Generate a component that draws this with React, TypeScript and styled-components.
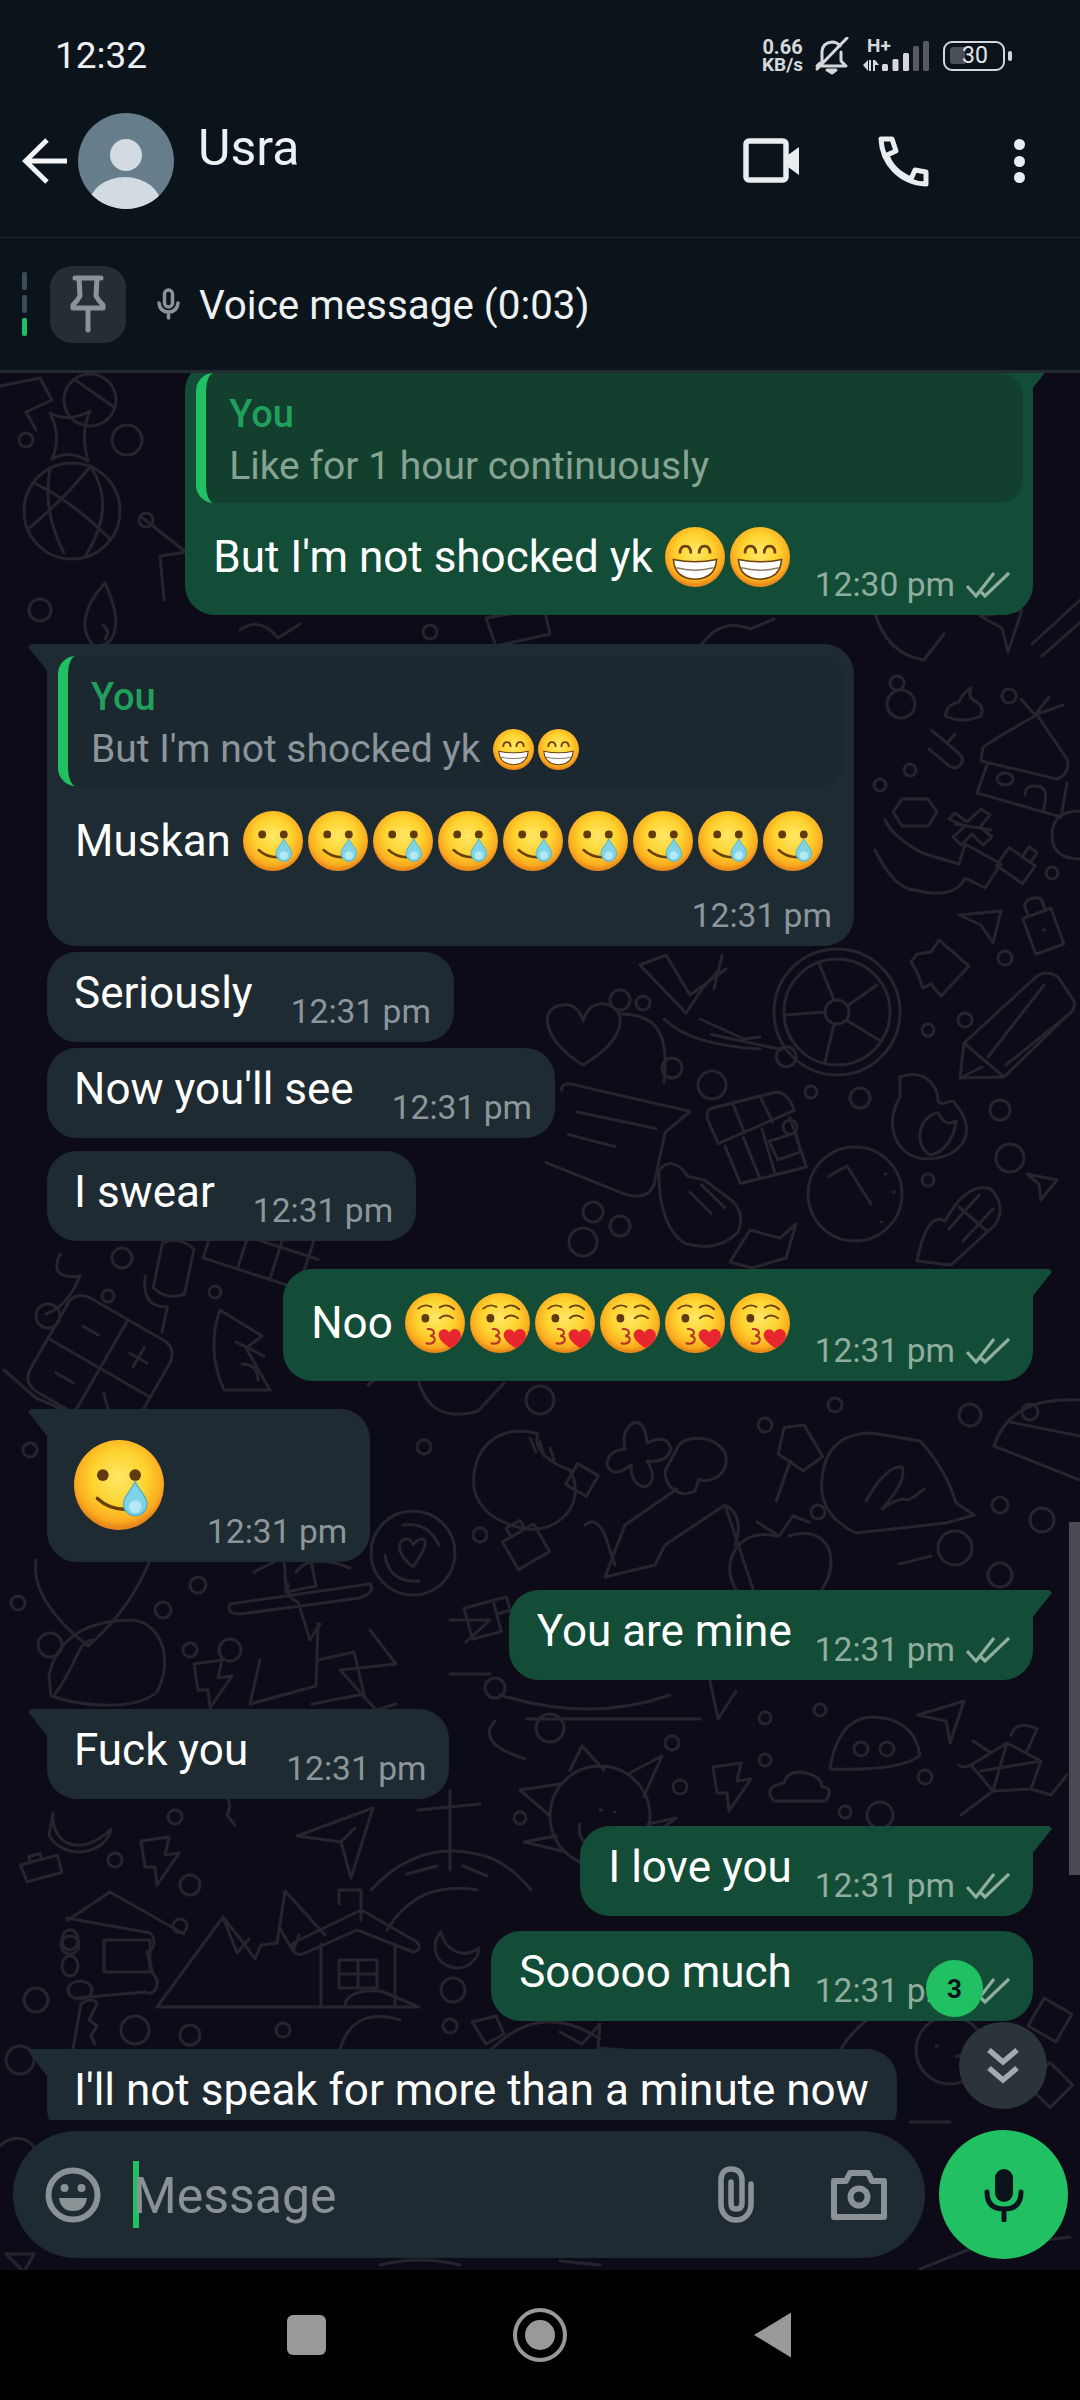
import React from 'react'
import styled, { createGlobalStyle } from 'styled-components'

const GlobalStyle = createGlobalStyle`
    html, body {
        margin: 0;
        padding: 0;
        background: #000;
        font-family: Roboto, "Liberation Sans", sans-serif;
    }
    * {
        box-sizing: border-box;
    }
`

const ring = (x: number, y: number, r: number) =>
    `M${x - r} ${y}a${r} ${r} 0 1 0 ${2 * r} 0a${r} ${r} 0 1 0 ${-2 * r} 0`

// wallpaper doodles, x/y are page positions of each drawing
const DOODLES: { x: number; y: number; rot?: number; d: string }[] = [
    { x: 72, y: 511, d: `${ring(0, 0, 48)}M-38 -28Q0 -10 38 28M-44 18Q-10 -10 18 -44M-22 -42Q-30 0 -8 42M20 -42Q44 -4 14 44` },
    { x: 72, y: 437, d: 'M-22 -24Q-4 -14 18 -26Q8 -4 16 24Q-2 12 -20 22Q-10 0 -22 -24Z' },
    { x: 90, y: 400, rot: 35, d: `${ring(0, 0, 26)}M-24 -8L24 -8` },
    { x: 127, y: 440, d: ring(0, 0, 15) },
    { x: 26, y: 440, d: ring(0, 0, 7) },
    { x: 146, y: 520, d: ring(0, 0, 7) },
    { x: 40, y: 610, d: ring(0, 0, 11) },
    { x: 105, y: 615, d: 'M0 -32C-22 -8 -26 14 -12 30C6 34 22 16 0 -32ZM-2 10Q6 16 0 24' },
    { x: 30, y: 400, d: 'M-30 -14L10 -22L22 0L-4 12L6 30' },
    { x: 150, y: 560, d: 'M-10 -44L36 -8L10 -4L14 40' },
    { x: 290, y: 640, d: 'M-50 -10Q-30 -24 -12 -2L10 -16' },
    { x: 430, y: 632, d: ring(0, 0, 7) },
    { x: 520, y: 632, d: 'M-34 -14L24 -24L30 2L-24 14Z' },
    { x: 730, y: 635, d: 'M-30 12Q-10 -18 20 -6L44 -16' },
    { x: 910, y: 640, d: 'M-36 -30Q-24 14 14 20L34 -6' },
    { x: 1000, y: 630, d: 'M-20 -14L22 -20L8 22L2 -2Z' },
    { x: 1060, y: 620, d: 'M-28 24L20 -20M-18 36L32 -8' },
    { x: 897, y: 683, d: ring(0, 0, 7) },
    { x: 901, y: 704, d: ring(0, 0, 14) },
    { x: 965, y: 702, d: 'M-20 14Q-18 2 -6 0Q-2 -10 6 -14Q2 -4 12 0Q20 6 16 14Q-2 22 -20 14Z' },
    { x: 1009, y: 696, d: ring(0, 0, 7) },
    { x: 910, y: 770, d: ring(0, 0, 6) },
    { x: 880, y: 785, d: ring(0, 0, 6) },
    { x: 945, y: 752, rot: 40, d: 'M-24 -8H10Q20 -8 20 0Q20 8 10 8H-14M-4 -20V-8' },
    { x: 1027, y: 761, d: 'M-44 -14Q-20 -30 10 -46L40 -2Q44 12 30 18L-46 0ZM-40 4L-50 32L34 56L40 22M-2 34Q-2 22 14 26Q22 30 16 50M8 -46L-6 -62M8 -46L22 -64M8 -46L36 -56M-30 18a8 6 0 1 0 16 0a8 6 0 1 0 -16 0' },
    { x: 915, y: 812, d: 'M-13 -13H13L22 0L13 14H-13L-22 0Z' },
    { x: 973, y: 823, d: 'M-18 -10L-6 -1L8 -14L17 -8L7 4L19 14L10 22L-1 11L-12 22L-20 14L-8 3L-24 -4Z' },
    { x: 1060, y: 835, d: 'M20 -24Q-8 -24 -8 0Q-8 24 20 24' },
    { x: 1018, y: 866, rot: 35, d: 'M-18 -10H14V12H-18ZM-2 -10V-22H8V-10' },
    { x: 1052, y: 873, d: ring(0, 0, 6) },
    { x: 935, y: 870, d: 'M-50 -50Q-40 -30 -10 -16L24 -6L30 -26L66 -6L50 18L30 8Q20 30 -20 20Q-40 20 -60 -20M20 -46L56 -40' },
    { x: 1040, y: 925, rot: -20, d: 'M-14 -12H16V26H-14ZM-8 -12V-24Q0 -32 10 -24V-12M2 6h1' },
    { x: 985, y: 925, d: 'M-26 -10L16 -14L8 18L-4 0Z' },
    { x: 937, y: 968, d: 'M-20 -14L-6 -16L2 -28L32 -2L4 28L-6 16L-14 20L-20 4L-26 -6Z' },
    { x: 1005, y: 958, d: ring(0, 0, 7) },
    { x: 965, y: 1020, d: ring(0, 0, 7) },
    { x: 928, y: 1030, d: ring(0, 0, 6) },
    { x: 837, y: 1012, d: `${ring(0, 0, 63)}${ring(0, 0, 53)}${ring(0, 0, 12)}M-12 0L-52 3M-3 -12L-18 -49M10 -6L40 -27M9 8L42 28M-3 12L-12 50` },
    { x: 1010, y: 1027, d: 'M-50 51L-46 16L26 -50Q36 -58 48 -50L64 -26Q66 -18 58 -12L-6 50ZM-46 16L-6 50M-22 30L34 -42M-4 38L58 -12M-50 51L-28 40' },
    { x: 620, y: 1000, d: ring(0, 0, 10) },
    { x: 643, y: 1003, d: ring(0, 0, 7) },
    { x: 710, y: 1005, d: 'M-70 -40L-24 8L-8 -16L8 -34M-70 -40L-44 -50L-20 -10L16 -36M-46 14Q-20 40 50 44M-10 14L34 34L50 32M12 -50L4 -16' },
    { x: 755, y: 1050, rot: 12, d: `M-46 -6H26${ring(32, 0, 10)}` },
    { x: 583, y: 1035, d: 'M0 30C-40 6 -46 -28 -20 -30C-8 -32 -2 -22 0 -14C4 -28 14 -34 26 -30C46 -20 40 6 0 30Z' },
    { x: 640, y: 1070, d: 'M-20 -56C14 -56 30 -40 24 12' },
    { x: 672, y: 1068, d: ring(0, 0, 10) },
    { x: 712, y: 1085, d: ring(0, 0, 14) },
    { x: 811, y: 1092, d: ring(0, 0, 6) },
    { x: 860, y: 1098, d: ring(0, 0, 10) },
    { x: 623, y: 1138, rot: 12, d: 'M-70 -34Q-72 -42 -60 -42L60 -40L40 -14L40 40Q36 58 10 54L-70 40M-50 -16L30 -16M-54 8L-6 10' },
    { x: 757, y: 1134, rot: -14, d: 'M-44 -24Q-46 -36 -36 -36L28 -36Q40 -34 42 -14L-40 0ZM-16 -36L-12 -4M12 -36L18 -8M-34 4L-28 44L40 44L36 -8M-14 0L-8 44M6 -4L8 44M10 10L38 8L38 28L14 30Z' },
    { x: 930, y: 1113, d: 'M-30 -36C-8 -44 8 -30 8 -12C14 -4 22 -18 26 -8C50 20 30 46 -4 46C-36 44 -46 10 -30 -16ZM0 42C-18 30 -10 2 8 0C14 10 18 12 26 8C24 26 14 40 0 42Z' },
    { x: 1000, y: 1110, d: ring(0, 0, 10) },
    { x: 1010, y: 1158, d: ring(0, 0, 14) },
    { x: 928, y: 1180, d: ring(0, 0, 6) },
    { x: 855, y: 1194, d: `${ring(0, 0, 47)}M-26 -18L-8 -28L16 10M30 -20h1M38 -2h1M26 28h1` },
    { x: 1027, y: 1180, d: 'M0 -6L30 0L14 20L12 4Z' },
    { x: 957, y: 1221, d: 'M-40 40Q-30 -10 -12 0Q10 -40 34 -32Q50 -14 38 4L-6 44ZM-8 8L22 -26M6 20L36 -12M2 -14L30 10' },
    { x: 700, y: 1205, rot: -8, d: 'M-36 -40Q-20 -54 -8 -30L8 -24L32 0Q44 14 34 32Q10 50 -20 36Q-44 16 -36 -40ZM-8 -14L10 10M4 -20L24 6' },
    { x: 790, y: 1127, d: ring(0, 0, 7) },
    { x: 620, y: 1226, d: ring(0, 0, 10) },
    { x: 593, y: 1212, d: ring(0, 0, 10) },
    { x: 583, y: 1242, d: ring(0, 0, 14) },
    { x: 760, y: 1244, d: 'M-30 18L-10 -14L20 -6L36 -20L26 14L-8 24Z' },
    { x: 70, y: 1290, d: 'M-24 24Q-2 16 10 -14Q-22 -10 -10 -36M24 -6' },
    { x: 170, y: 1285, rot: 12, d: 'M-16 -40Q0 -50 16 -40V6Q0 16 -16 6ZM-26 -4Q-24 28 2 22V48' },
    { x: 122, y: 1258, d: ring(0, 0, 10) },
    { x: 108, y: 1296, d: ring(0, 0, 6) },
    { x: 48, y: 1316, d: ring(0, 0, 12) },
    { x: 215, y: 1292, d: ring(0, 0, 6) },
    { x: 255, y: 1260, rot: 18, d: 'M-60 -20H60M-50 -44H50V14H-50ZM-14 -44V14M20 -44V14' },
    { x: 103, y: 1363, rot: 30, d: 'M-60 -30Q-62 -50 -40 -50H40Q58 -50 58 -30V40Q58 58 40 58H-40Q-60 58 -60 40ZM-60 6H58M0 -50V58M-36 -22H-18M28 -34V-12M18 -22H38M-36 32H-16M16 26L36 46' },
    { x: 250, y: 1350, d: 'M-30 -40L12 -14L-4 -2L20 40L-26 40Q-44 0 -30 -40ZM-14 -8L14 6M-8 14Q8 14 8 30' },
    { x: 34, y: 1420, d: 'M-30 -50L2 -22L30 -10' },
    { x: 30, y: 1450, d: ring(0, 0, 7) },
    { x: 388, y: 1395, d: 'M-20 -10Q0 -30 30 -20' },
    { x: 458, y: 1397, d: 'M-40 -18Q-28 28 20 14L46 -14' },
    { x: 540, y: 1400, d: ring(0, 0, 14) },
    { x: 530, y: 1478, d: 'M-56 10C-60 -30 -30 -56 8 -44C2 -28 22 -14 40 -8C60 30 20 62 -16 48C-36 42 -52 30 -56 10ZM0 -40L6 -26M10 -36L14 -22M20 -30L24 -18' },
    { x: 424, y: 1447, d: ring(0, 0, 7) },
    { x: 582, y: 1480, rot: 30, d: 'M-12 -12H12V12H-12Z' },
    { x: 637, y: 1455, d: 'M-4 -32Q8 -36 10 -12Q30 -22 34 -6Q30 8 10 6Q22 26 8 32Q-6 30 -6 10Q-24 24 -30 10Q-30 -4 -12 -6Q-16 -24 -4 -32Z' },
    { x: 685, y: 1495, d: 'M-6 -50C4 -60 30 -60 40 -42C46 -22 26 -10 14 -16L10 -4C-6 4 -20 -8 -20 -24ZM-8 -6L-60 30L-80 82L-30 70L-20 50L40 10L70 100M40 10Q60 20 50 50M-100 30Q-90 20 -80 40L-70 70' },
    { x: 796, y: 1455, rot: 30, d: 'M-24 -18L-8 -30L24 -12L14 10L-16 8ZM-2 8L6 50' },
    { x: 765, y: 1425, d: ring(0, 0, 7) },
    { x: 835, y: 1405, d: ring(0, 0, 7) },
    { x: 896, y: 1489, d: 'M-74 -10Q-70 -56 -24 -56L24 -48Q50 -20 60 14L78 26L50 34L-40 44Q-78 26 -74 -10ZM-30 12Q-10 -24 6 -22Q12 -10 -14 20Q0 10 8 10Q12 14 28 0' },
    { x: 1020, y: 1440, d: 'M-26 6Q-10 -44 60 -40M-26 6L60 40M-10 -18L60 -4' },
    { x: 970, y: 1415, d: ring(0, 0, 11) },
    { x: 1030, y: 1412, d: ring(0, 0, 8) },
    { x: 1000, y: 1505, d: ring(0, 0, 8) },
    { x: 1042, y: 1520, d: ring(0, 0, 12) },
    { x: 1000, y: 1575, d: ring(0, 0, 12) },
    { x: 781, y: 1564, d: 'M-4 -28C-40 -36 -56 -8 -50 14C-42 40 -20 50 0 38C30 50 50 20 50 -2C50 -26 30 -36 8 -28M-2 -28L-24 -42M-2 -28L12 -48L28 -42' },
    { x: 915, y: 1560, d: 'M-16 4L16 -4M30 -8' },
    { x: 955, y: 1548, d: ring(0, 0, 17) },
    { x: 818, y: 1512, d: ring(0, 0, 7) },
    { x: 525, y: 1545, rot: -30, d: 'M-18 -14H18V18H-18ZM-8 -14V-24H8V-14' },
    { x: 480, y: 1535, d: ring(0, 0, 7) },
    { x: 413, y: 1553, d: `${ring(0, 0, 42)}M-28 2Q-24 30 6 28M26 -8Q14 -32 -10 -28M0 14C-18 0 -16 -14 -6 -14Q-2 -14 0 -8Q4 -14 10 -14Q18 -12 0 14Z` },
    { x: 300, y: 1490, rot: 15, d: 'M-16 -40Q0 -50 16 -40V-12H-16ZM-8 -10V20H8V-10M0 4h1' },
    { x: 300, y: 1590, d: 'M-70 14Q-74 24 -60 24L60 8Q76 2 70 -6L-70 14ZM-16 -34C-10 -44 10 -44 10 -34L16 -4L-14 2ZM-40 -46L-26 -28L-46 -18' },
    { x: 60, y: 1600, d: 'M-24 -40Q-30 0 28 46Q70 10 90 -40' },
    { x: 18, y: 1603, d: ring(0, 0, 7) },
    { x: 163, y: 1610, d: ring(0, 0, 8) },
    { x: 198, y: 1585, d: ring(0, 0, 8) },
    { x: 320, y: 1660, d: 'M-24 -88Q-10 -108 30 -92M-32 -76Q-34 -62 -22 -58L-10 -20L0 -36M-60 0L-70 44L-4 26L-2 -36M50 -30L76 4L20 10L56 50L76 44M-2 0L34 -8L44 34L-8 44' },
    { x: 107, y: 1670, d: 'M-58 6C-50 -36 -14 -50 26 -50C56 -46 66 -8 50 22C30 40 -20 38 -56 26ZM-52 24C-30 -4 -30 -30 -14 -30' },
    { x: 50, y: 1645, d: ring(0, 0, 12) },
    { x: 190, y: 1650, d: ring(0, 0, 7) },
    { x: 230, y: 1650, d: ring(0, 0, 11) },
    { x: 210, y: 1684, d: 'M-16 -20L12 -24L8 -6L22 -8L0 24L-2 6L-12 6Z' },
    { x: 470, y: 1650, d: 'M-20 -30H20L-4 -8M-20 24H20' },
    { x: 490, y: 1620, rot: -15, d: 'M-22 -18V14H8V-18ZM8 -18H22V-4H8' },
    { x: 495, y: 1688, d: ring(0, 0, 10) },
    { x: 505, y: 1735, d: 'M-10 -14Q-30 8 20 24' },
    { x: 590, y: 1705, d: 'M-90 -10Q0 18 80 -10M-64 14L110 14M120 -24L128 14L146 -14' },
    { x: 550, y: 1728, d: ring(0, 0, 14) },
    { x: 672, y: 1743, d: ring(0, 0, 7) },
    { x: 765, y: 1718, d: ring(0, 0, 6) },
    { x: 820, y: 1710, d: ring(0, 0, 6) },
    { x: 940, y: 1719, d: 'M-22 -4L24 -18L10 24L6 2Z' },
    { x: 874, y: 1747, d: 'M-44 22Q-36 -30 0 -30Q40 -28 46 8Q30 24 -44 22ZM-20 2a7 7 0 1 0 14 0a7 7 0 1 0 -14 0M6 2a7 7 0 1 0 14 0a7 7 0 1 0 -14 0' },
    { x: 1007, y: 1765, d: 'M-36 0L0 -22L34 -4L24 24L-14 26ZM-16 -12L-34 -24M20 -14L30 -36Q10 -46 4 -30M-36 0Q-44 4 -48 0M-14 26L-46 50M24 24L44 30L60 10M0 -22L-14 26M34 -4L-26 6' },
    { x: 800, y: 1787, d: 'M-26 14Q-38 0 -16 -4Q-12 -18 6 -14Q22 -10 22 0Q34 0 26 14Z' },
    { x: 729, y: 1787, d: 'M-16 -20L12 -24L8 -6L22 -8L0 24L-2 6L-12 6Z' },
    { x: 600, y: 1816, d: `${ring(0, 0, 50)}M-30 -46L-18 -70L4 -46M28 -42L62 -60L44 -20M48 8L76 2L44 26M-50 0L-80 -26L-40 -32M-44 20L-76 26L-34 36M-20 8Q-24 26 -6 30M0 -6h2M14 -4h1` },
    { x: 520, y: 1818, d: ring(0, 0, 6) },
    { x: 680, y: 1787, d: ring(0, 0, 7) },
    { x: 765, y: 1760, d: ring(0, 0, 6) },
    { x: 925, y: 1777, d: ring(0, 0, 7) },
    { x: 880, y: 1815, d: ring(0, 0, 13) },
    { x: 845, y: 1812, d: ring(0, 0, 6) },
    { x: 343, y: 1838, d: 'M-46 -2L30 -30L8 40L-2 4ZM-2 4L12 -10' },
    { x: 157, y: 1861, d: 'M-16 -20L12 -24L8 -6L22 -8L0 24L-2 6L-12 6Z' },
    { x: 77, y: 1833, d: 'M-24 -20C-26 14 6 24 34 -4C30 20 -12 30 -28 2Z' },
    { x: 40, y: 1868, rot: -15, d: 'M-18 -8H20V10H-16ZM-8 -8V-14H4V-8' },
    { x: 115, y: 1860, d: ring(0, 0, 7) },
    { x: 190, y: 1885, d: ring(0, 0, 10) },
    { x: 175, y: 1817, d: ring(0, 0, 7) },
    { x: 235, y: 1805, d: 'M-14 -18C-8 -8 -2 -2 -8 10L0 20' },
    { x: 70, y: 1945, d: ring(0, 0, 9) },
    { x: 180, y: 1926, d: ring(0, 0, 7) },
    { x: 470, y: 1830, d: 'M-20 -40V40M-52 -20L10 -26' },
    { x: 140, y: 1950, d: 'M-72 -30L-30 -58L44 -16M-78 -10a8 10 0 1 0 16 0a8 10 0 1 0 -16 0M-78 16a8 10 0 1 0 16 0a8 10 0 1 0 -16 0M-72 40a12 9 0 1 0 24 0a12 9 0 1 0 -24 0M-36 -10H10V22H-36Z' },
    { x: 107, y: 1950, d: 'M-40 -32L38 -18a8 10 0 1 1 2 20L46 24a8 10 0 1 1 -8 18L-30 48' },
    { x: 357, y: 1950, d: 'M-64 0Q-70 -4 -58 -10L0 -38Q4 -40 8 -38L60 -8Q66 0 56 2L0 -20L-54 4Q-60 6 -64 0ZM-36 -6V56M38 -6V56M-18 10H20V38H-18ZM1 10V38M-18 24H20M-18 -46V-60H4V-30' },
    { x: 285, y: 1945, d: 'M-128 62L-62 -28L-40 0L-30 14L-24 0L-8 -2L0 -54L40 -10M-128 62H134M-62 -28L-48 8L-36 -6M-6 -18L8 6L14 -10M60 62Q60 44 96 46L134 62' },
    { x: 447, y: 1950, d: 'M-76 -60Q-30 -110 30 -96Q60 -90 84 -60M-60 -20Q-30 -70 30 -60M-40 -76L-10 -84M16 -84L40 -74' },
    { x: 455, y: 1950, d: 'M-14 -18C-26 -6 -20 16 2 18C14 18 24 8 24 -2C8 10 -10 0 -14 -18Z' },
    { x: 453, y: 1990, d: ring(0, 0, 12) },
    { x: 36, y: 2000, d: ring(0, 0, 12) },
    { x: 135, y: 2030, d: ring(0, 0, 14) },
    { x: 190, y: 2035, d: ring(0, 0, 10) },
    { x: 85, y: 2030, d: 'M-14 30L-4 -26Q8 -34 12 -26L4 -10L12 -4L6 6L10 14' },
    { x: 283, y: 2030, d: ring(0, 0, 7) },
    { x: 360, y: 2030, d: 'M-20 20Q-8 -24 40 -10' },
    { x: 540, y: 2025, d: 'M-50 26Q0 -26 60 14' },
    { x: 450, y: 2026, d: ring(0, 0, 7) },
    { x: 488, y: 2030, d: 'M-16 -8L8 -14L16 4L-2 14Z' },
    { x: 590, y: 2040, d: 'M-30 -8L-8 4L10 -16L8 8L34 10' },
    { x: 20, y: 2060, d: ring(0, 0, 14) },
    { x: 950, y: 2050, d: `${ring(0, 0, 34)}M-14 -4h1M6 6h8` },
    { x: 880, y: 2030, d: 'M-40 20Q0 -40 40 -10' },
    { x: 1050, y: 2020, rot: 30, d: 'M-16 -16H16V16H-16Z' },
    { x: 1050, y: 2085, rot: 45, d: 'M-16 -16H16V16H-16Z' },
    { x: 930, y: 2122, d: 'M-20 0L20 0' },
    { x: 30, y: 2160, d: 'M-30 -14C-14 -30 8 -20 10 4L-6 30' },
    { x: 20, y: 2262, d: 'M-14 -8L14 -8L4 10Z' },
    { x: 960, y: 2265, d: 'M-40 4L30 -24M60 -22L110 -28' },
    { x: 420, y: 2265, d: 'M-40 0Q0 -10 40 0M140 -4L180 0' },
]

const Wallpaper = () => (
    <WallpaperSvg viewBox="0 373 1080 1897" fill="none" stroke="#26242e" strokeWidth="3" strokeLinecap="round" strokeLinejoin="round">
        {DOODLES.map((o, i) => (
            <path key={i} d={o.d} transform={`translate(${o.x} ${o.y}) rotate(${o.rot ?? 0})`} />
        ))}
    </WallpaperSvg>
)

const FaceDefs = () => (
    <defs>
        <radialGradient id="face" cx="50%" cy="42%" r="55%">
            <stop offset="0%" stopColor="#ffe766" />
            <stop offset="55%" stopColor="#fdd32f" />
            <stop offset="88%" stopColor="#fbab1f" />
            <stop offset="100%" stopColor="#e8891a" />
        </radialGradient>
    </defs>
)

const TearEmoji = ({ size = 60 }: { size?: number }) => (
    <svg width={size} height={size} viewBox="0 0 100 100" style={{ flex: 'none' }}>
        <FaceDefs />
        <circle cx="50" cy="50" r="50" fill="url(#face)" />
        <circle cx="32" cy="39" r="6.5" fill="#613a10" />
        <circle cx="68" cy="39" r="6.5" fill="#613a10" />
        <path d="M26 65Q40 78 60 77" fill="none" stroke="#6b3f0c" strokeWidth="4" strokeLinecap="round" />
        <path d="M68 46C72 56 81 62 81 71A13 13 0 0 1 55 71C55 62 64 56 68 46Z" fill="#7fd3e6" stroke="#4fb0c9" strokeWidth="1.5" />
        <ellipse cx="68" cy="74" rx="7" ry="7" fill="#b5e9f2" />
    </svg>
)

const GrinEmoji = ({ size = 60 }: { size?: number }) => (
    <svg width={size} height={size} viewBox="0 0 100 100" style={{ flex: 'none' }}>
        <FaceDefs />
        <circle cx="50" cy="50" r="50" fill="url(#face)" />
        <path d="M25 44Q25 32 34 32Q43 32 43 44M57 44Q57 32 66 32Q75 32 75 44" fill="none" stroke="#6b4210" strokeWidth="4.5" />
        <path d="M14 54Q50 62 86 54Q84 86 50 87Q16 86 14 54Z" fill="#fff" stroke="#6b4210" strokeWidth="2.5" />
        <path d="M19 68Q50 76 81 68" fill="none" stroke="#8a7a62" strokeWidth="2.5" />
    </svg>
)

const KissEmoji = () => (
    <svg width={60} height={60} viewBox="0 0 100 100" style={{ flex: 'none' }}>
        <FaceDefs />
        <circle cx="50" cy="50" r="50" fill="url(#face)" />
        <ellipse cx="34" cy="42" rx="6.5" ry="7" fill="#5f3a10" />
        <path d="M22 26Q32 17 44 23M58 24Q70 16 82 27M58 42Q68 33 80 42" fill="none" stroke="#6b4210" strokeWidth="3.2" strokeLinecap="round" />
        <path d="M38 60Q50 60 48 68Q46 71 42 71Q52 73 49 80Q46 86 36 84" fill="none" stroke="#b7352c" strokeWidth="3.5" strokeLinecap="round" />
        <path d="M76 92C60 82 52 72 58 64C63 58 71 60 74 66C78 58 88 58 92 66C96 76 88 86 76 92Z" fill="#e8262f" />
    </svg>
)

const Ticks = () => (
    <TickIcon width="44" height="27" viewBox="0 0 44 27" fill="none" stroke="currentColor" strokeWidth="3.2">
        <path d="M1 15L10 25L28 2M15 21L19 25L43 2" />
    </TickIcon>
)

const Time = ({ t, read }: { t: string; read?: boolean }) => (
    <Meta>
        {t}
        {read && <Ticks />}
    </Meta>
)

const App = () => (
    <Screen>
        <GlobalStyle />
        <TopPanel>
            <StatusBar>
                <Clock>12:32</Clock>
                <StatusIcons>
                    <NetSpeed>
                        <span>0.66</span>
                        <span>KB/s</span>
                    </NetSpeed>
                    <svg width="34" height="38" viewBox="0 0 34 38" fill="none" stroke="#d5d8da" strokeWidth="3" strokeLinecap="round" strokeLinejoin="round">
                        <path d="M7 24V14Q8 6 17 5Q22 5 25 9M26 15V24L31 29H2L5 26M32 1L2 32" />
                        <path d="M12 33H21L17 36Z" fill="#d5d8da" />
                    </svg>
                    <Network>
                        <NetLabel>H+</NetLabel>
                        <svg width="66" height="32" viewBox="0 0 66 32" fill="#d5d8da">
                            <path d="M0 25L5 20V31ZM6 20H8V31H6ZM10 20H12V31H10ZM12 20L16 25H12Z" />
                            <rect x="19" y="24" width="6" height="7" rx="1.5" />
                            <rect x="29.5" y="19" width="6" height="12" rx="1.5" />
                            <rect x="40" y="13" width="6" height="18" rx="1.5" />
                            <rect x="50" y="6" width="6" height="25" rx="1.5" fill="#565b60" />
                            <rect x="60" y="1" width="6" height="30" rx="1.5" fill="#565b60" />
                        </svg>
                    </Network>
                    <Battery>
                        <BatteryFill />
                        <BatteryValue>30</BatteryValue>
                    </Battery>
                    <BatteryCap />
                </StatusIcons>
            </StatusBar>
            <AppBar>
                <svg width="50" height="48" viewBox="0 0 50 48" fill="none" stroke="#f2f4f5" strokeWidth="5">
                    <path d="M45 24H3M25 3L3.5 24L25 45" />
                </svg>
                <svg width="96" height="96" viewBox="0 0 96 96">
                    <clipPath id="avatar">
                        <circle cx="48" cy="48" r="48" />
                    </clipPath>
                    <circle cx="48" cy="48" r="48" fill="#667d8b" />
                    <circle cx="48" cy="42" r="16" fill="#d2dbe1" />
                    <ellipse cx="47" cy="92" rx="36" ry="28" fill="#d2dbe1" clipPath="url(#avatar)" />
                </svg>
                <ContactName>Usra</ContactName>
                <AppActions>
                    <svg width="58" height="46" viewBox="0 0 58 46" fill="none">
                        <rect x="3" y="3" width="40" height="39" rx="3" stroke="#e9edef" strokeWidth="5.5" />
                        <path d="M45 17L56 9V37L45 29Z" fill="#e9edef" />
                    </svg>
                    <svg width="52" height="52" viewBox="0 0 52 52" fill="none" stroke="#e9edef" strokeWidth="5" strokeLinejoin="round">
                        <path d="M3 4H14L18 16L9 20C12 30 21 39 33 44L37 35L48 37V49C22 48 4 28 3 4Z" />
                    </svg>
                    <MoreDots>
                        <i />
                        <i />
                        <i />
                    </MoreDots>
                </AppActions>
            </AppBar>
            <PinBar>
                <PinTicks>
                    <PinTick />
                    <PinTick />
                    <PinTick $on />
                </PinTicks>
                <PinBox>
                    <svg width="38" height="58" viewBox="0 0 38 58" fill="none" stroke="#8c9498" strokeWidth="5" strokeLinecap="round" strokeLinejoin="round">
                        <path d="M6 3H32M10 3L11 21Q9 25 4 30V33H34V30Q29 25 27 21L28 3M19 35V55" />
                    </svg>
                </PinBox>
                <svg width="23" height="32" viewBox="0 0 23 32" fill="none" stroke="#8b9397" strokeWidth="3.5" strokeLinecap="round">
                    <rect x="7.5" y="2" width="8" height="17" rx="4" />
                    <path d="M2 15Q3 24 11.5 24Q20 24 21 15M11.5 24V30" />
                </svg>
                <PinText>Voice message (0:03)</PinText>
            </PinBar>
        </TopPanel>

        <ChatArea>
            <Wallpaper />
            <MessageList>
                <Bubble $out $tail $mt={-12} $stack>
                    <Quote $out>
                        <QuoteAuthor>You</QuoteAuthor>
                        <QuoteBody $out>Like for 1 hour continuously</QuoteBody>
                    </Quote>
                    <BubbleRow>
                        <EmojiLine>
                            But I'm not shocked yk
                            <GrinEmoji />
                            <GrinEmoji />
                        </EmojiLine>
                        <Time t="12:30 pm" read />
                    </BubbleRow>
                </Bubble>

                <Bubble $tail $mt={29} $stack>
                    <Quote>
                        <QuoteAuthor>You</QuoteAuthor>
                        <QuoteBody>
                            But I'm not shocked yk
                            <GrinEmoji size={41} />
                            <GrinEmoji size={41} />
                        </QuoteBody>
                    </Quote>
                    <StackedEmojiLine>
                        Muskan
                        {Array.from({ length: 9 }).map((_, i) => (
                            <TearEmoji key={i} />
                        ))}
                    </StackedEmojiLine>
                    <StackedTime>12:31 pm</StackedTime>
                </Bubble>

                <Bubble $mt={6}>
                    <PlainText $gap={38}>Seriously</PlainText>
                    <Time t="12:31 pm" />
                </Bubble>
                <Bubble $mt={6}>
                    <PlainText $gap={38}>Now you'll see</PlainText>
                    <Time t="12:31 pm" />
                </Bubble>
                <Bubble $mt={13}>
                    <PlainText $gap={38}>I swear</PlainText>
                    <Time t="12:31 pm" />
                </Bubble>

                <Bubble $out $tail $mt={28}>
                    <EmojiLine>
                        Noo
                        {Array.from({ length: 6 }).map((_, i) => (
                            <KissEmoji key={i} />
                        ))}
                    </EmojiLine>
                    <Time t="12:31 pm" read />
                </Bubble>

                <Bubble $tail $mt={28}>
                    <BigEmoji>
                        <TearEmoji size={90} />
                    </BigEmoji>
                    <Time t="12:31 pm" />
                </Bubble>

                <Bubble $out $tail $mt={28}>
                    <PlainText $gap={23}>You are mine</PlainText>
                    <Time t="12:31 pm" read />
                </Bubble>
                <Bubble $tail $mt={29}>
                    <PlainText $gap={38}>Fuck you</PlainText>
                    <Time t="12:31 pm" />
                </Bubble>
                <Bubble $out $tail $mt={27}>
                    <PlainText $gap={23}>I love you</PlainText>
                    <Time t="12:31 pm" read />
                </Bubble>
                <Bubble $out $mt={15}>
                    <PlainText $gap={23}>Sooooo much</PlainText>
                    <Time t="12:31 pm" read />
                </Bubble>
                <Bubble $tail $mt={28}>
                    <PlainText $gap={5}>I'll not speak for more than a minute now</PlainText>
                </Bubble>
            </MessageList>

            <ComposerRow>
                <Composer>
                    <svg width="56" height="56" viewBox="0 0 56 56" fill="none">
                        <circle cx="28" cy="28" r="24.5" stroke="#8a9296" strokeWidth="6" />
                        <circle cx="19.5" cy="21" r="4" fill="#8a9296" />
                        <circle cx="36.5" cy="21" r="4" fill="#8a9296" />
                        <path d="M14 31H42Q40 44 28 44Q16 44 14 31Z" fill="#8a9296" />
                    </svg>
                    <Cursor />
                    <Placeholder>Message</Placeholder>
                    <svg width="38" height="57" viewBox="0 0 38 57" fill="none" stroke="#8a9296" strokeWidth="5.5" strokeLinecap="round">
                        <path d="M34 18V38C34 47 28 54 19 54C10 54 4 47 4 38V14C4 7 8 3 14 3C21 3 25 7 25 14V37C25 41 23 43 19 43C15 43 14 41 14 37V16" />
                    </svg>
                    <CameraIcon width="58" height="52" viewBox="0 0 58 52" fill="none" stroke="#8a9296" strokeWidth="6" strokeLinejoin="round">
                        <path d="M4 12H16L20 4H38L42 12H54V48H4Z" />
                        <circle cx="29" cy="28" r="8.5" />
                    </CameraIcon>
                </Composer>
                <MicButton>
                    <svg width="40" height="54" viewBox="0 0 40 54" fill="none">
                        <rect x="11" y="1" width="18" height="33" rx="9" fill="#0b141a" />
                        <path d="M3 24Q3 41 20 41Q37 41 37 24M20 41V52" stroke="#0b141a" strokeWidth="5" strokeLinecap="round" />
                    </svg>
                </MicButton>
            </ComposerRow>

            <ScrollThumb />
            <ScrollDown>
                <svg width="34" height="38" viewBox="0 0 34 38" fill="none" stroke="#a3abaf" strokeWidth="5.5">
                    <path d="M3 3L17 15L31 3M3 21L17 33L31 21" />
                </svg>
            </ScrollDown>
            <UnreadBadge>3</UnreadBadge>
        </ChatArea>

        <NavBar>
            <NavSquare />
            <NavCircle />
            <NavTriangle />
        </NavBar>
    </Screen>
)

const Screen = styled.div`
    width: 1080px;
    height: 2400px;
    display: flex;
    flex-direction: column;
    overflow: hidden;
    color: #fff;
    font-family: Roboto, "Liberation Sans", sans-serif;
`

const TopPanel = styled.header`
    background: #0b141a;
    border-bottom: 3px solid #232b30;
    height: 373px;
    flex: none;
`

const StatusBar = styled.div`
    height: 108px;
    display: flex;
    align-items: center;
    justify-content: space-between;
    padding: 4px 68px 0 55px;
`

const Clock = styled.div`
    font-size: 37px;
    line-height: 44px;
    color: #eef0f1;
`

const StatusIcons = styled.div`
    display: flex;
    align-items: center;
    color: #d5d8da;
`

const NetSpeed = styled.div`
    display: flex;
    flex-direction: column;
    align-items: center;
    font-size: 20px;
    line-height: 18px;
    font-weight: 700;
    margin-right: 12px;
    span:last-child {
        font-size: 19px;
    }
`

const Network = styled.div`
    margin: 0 14px 0 14px;
    position: relative;
    height: 32px;
`

const NetLabel = styled.div`
    position: absolute;
    left: 4px;
    top: -3px;
    font-size: 19px;
    line-height: 17px;
    font-weight: 700;
`

const Battery = styled.div`
    position: relative;
    width: 62px;
    height: 30px;
    border: 2.5px solid #d5d8da;
    border-radius: 9px;
    padding: 4px 0 0 5px;
    display: flex;
`

const BatteryFill = styled.div`
    width: 15px;
    height: 17px;
    background: #4a5056;
    border-radius: 3px 0 0 3px;
`

const BatteryValue = styled.div`
    position: absolute;
    left: 17px;
    top: 0;
    font-size: 23px;
    line-height: 25px;
    color: #e4e6e8;
`

const BatteryCap = styled.div`
    width: 4px;
    height: 10px;
    margin-left: 3px;
    border-radius: 2px;
    background: #d5d8da;
`

const AppBar = styled.div`
    height: 130px;
    display: flex;
    align-items: flex-start;
    padding: 5px 55px 0 22px;
    border-bottom: 1px solid #1c252b;
    svg {
        flex: none;
    }
    > svg:first-child {
        margin: 24px 6px 0 0;
    }
`

const ContactName = styled.div`
    font-size: 50px;
    line-height: 58px;
    margin: 6px 0 0 24px;
    color: #eef1f2;
`

const AppActions = styled.div`
    margin-left: auto;
    display: flex;
    align-items: center;
    gap: 77px;
    height: 96px;
`

const MoreDots = styled.div`
    display: flex;
    flex-direction: column;
    gap: 5.5px;
    margin-left: 7px;
    i {
        display: block;
        width: 11px;
        height: 11px;
        border-radius: 50%;
        background: #e9edef;
    }
`

const PinBar = styled.div`
    height: 132px;
    display: flex;
    align-items: center;
    padding-left: 22px;
`

const PinTicks = styled.div`
    display: flex;
    flex-direction: column;
    gap: 5px;
    margin-right: 23px;
`

const PinTick = styled.div<{ $on?: boolean }>`
    width: 5px;
    height: 18px;
    border-radius: 2px;
    background: ${(p) => (p.$on ? '#21c063' : '#3d4b56')};
`

const PinBox = styled.div`
    width: 76px;
    height: 77px;
    border-radius: 22px;
    background: #262e33;
    display: flex;
    align-items: center;
    justify-content: center;
    margin-right: 31px;
`

const PinText = styled.div`
    font-size: 40.4px;
    line-height: 48px;
    margin: 3px 0 0 19px;
    color: #eef1f2;
`

const ChatArea = styled.main`
    position: relative;
    flex: 1;
    min-height: 0;
    display: flex;
    flex-direction: column;
    background: #0e0b18;
    overflow: hidden;
`

const WallpaperSvg = styled.svg`
    position: absolute;
    inset: 0;
    width: 100%;
    height: 100%;
`

const MessageList = styled.div`
    position: relative;
    height: 1747px;
    flex: none;
    overflow: hidden;
    padding: 0 47px;
    display: flex;
    flex-direction: column;
`

const Bubble = styled.div<{ $out?: boolean; $tail?: boolean; $mt?: number; $stack?: boolean }>`
    position: relative;
    flex: none;
    display: flex;
    flex-direction: ${(p) => (p.$stack ? 'column' : 'row')};
    align-items: ${(p) => (p.$stack ? 'stretch' : 'flex-end')};
    align-self: ${(p) => (p.$out ? 'flex-end' : 'flex-start')};
    margin-top: ${(p) => p.$mt ?? 0}px;
    padding: ${(p) => (p.$stack ? '12px 10px 10px 11px' : `0 23px 10px ${p.$out ? 28 : 27}px`)};
    background: ${(p) => (p.$out ? '#144d37' : '#1f2b32')};
    color: ${(p) => (p.$out ? '#8fae9f' : '#8c969b')};
    border-radius: 30px;
    ${(p) => p.$tail && (p.$out ? 'border-top-right-radius: 0;' : 'border-top-left-radius: 0;')}
    ${(p) =>
        p.$tail &&
        `
        &::before {
            content: '';
            position: absolute;
            top: 0;
            ${p.$out ? 'right: -19px;' : 'left: -19px;'}
            width: 20px;
            height: 28px;
            background: ${p.$out ? '#144d37' : '#1f2b32'};
            clip-path: ${p.$out ? 'polygon(0 0, 85% 0, 100% 10%, 0 100%)' : 'polygon(100% 0, 15% 0, 0 10%, 100% 100%)'};
        }
    `}
`

const BubbleRow = styled.div`
    display: flex;
    align-items: flex-end;
    padding: 0 13px 0 17px;
`

const PlainText = styled.div<{ $gap: number }>`
    font-size: 44px;
    line-height: 52px;
    color: #fff;
    white-space: nowrap;
    padding: 15px 0 13px;
    margin-right: ${(p) => p.$gap}px;
`

const EmojiLine = styled.div`
    display: flex;
    align-items: center;
    gap: 5px;
    height: 60px;
    margin: 24px 25px 18px 0;
    font-size: 44px;
    line-height: 52px;
    color: #fff;
    white-space: nowrap;
    svg:first-of-type {
        margin-left: 7px;
    }
`

const StackedEmojiLine = styled(EmojiLine)`
    margin: 25px 21px 25px 17px;
`

const BigEmoji = styled.div`
    height: 143px;
    padding-top: 31px;
    margin-right: 43px;
    display: flex;
`

const Quote = styled.div<{ $out?: boolean }>`
    background: ${(p) => (p.$out ? '#133f2e' : '#1c2830')};
    border-left: 10px solid #21c063;
    border-radius: 18px 24px 24px 18px;
    padding: 19px 20px 15px 23px;
    height: 130px;
`

const QuoteAuthor = styled.div`
    font-size: 38px;
    line-height: 44px;
    font-weight: 500;
    color: #21a05c;
`

const QuoteBody = styled.div<{ $out?: boolean }>`
    display: flex;
    align-items: center;
    font-size: 39px;
    line-height: 46px;
    margin-top: 7px;
    gap: 4px;
    color: ${(p) => (p.$out ? '#86a394' : '#8c959b')};
    white-space: nowrap;
    svg:first-of-type {
        margin-left: 8px;
    }
`

const Meta = styled.div`
    display: flex;
    align-items: flex-end;
    gap: 11px;
    font-size: 33.6px;
    line-height: 40px;
    white-space: nowrap;
    flex: none;
`

const TickIcon = styled.svg`
    margin-bottom: 7px;
`

const StackedTime = styled(Meta)`
    justify-content: flex-end;
    padding-right: 12px;
`

const ComposerRow = styled.div`
    position: relative;
    flex: none;
    display: flex;
    align-items: center;
    gap: 14px;
    margin-top: 10px;
    padding: 0 12px 0 13px;
`

const Composer = styled.div`
    flex: 1;
    height: 127px;
    border-radius: 64px;
    background: #1f2b32;
    display: flex;
    align-items: center;
    padding: 0 37px 0 32px;
`

const Cursor = styled.div`
    width: 6px;
    height: 67px;
    background: #21c063;
    margin-left: 32px;
`

const Placeholder = styled.div`
    flex: 1;
    font-size: 50px;
    line-height: 58px;
    color: #8a9297;
    margin: 3px 0 0 -6px;
`

const CameraIcon = styled.svg`
    margin-left: 75px;
`

const MicButton = styled.div`
    width: 129px;
    height: 129px;
    flex: none;
    border-radius: 50%;
    background: #21c063;
    display: flex;
    align-items: center;
    justify-content: center;
`

const ScrollThumb = styled.div`
    position: absolute;
    top: 1149px;
    right: 0;
    width: 11px;
    height: 353px;
    background: rgba(125, 128, 135, 0.55);
`

const ScrollDown = styled.div`
    position: absolute;
    top: 1649px;
    right: 33px;
    width: 88px;
    height: 87px;
    border-radius: 50%;
    background: #2a3439;
    display: flex;
    align-items: center;
    justify-content: center;
`

const UnreadBadge = styled.div`
    position: absolute;
    top: 1587px;
    right: 97px;
    width: 57px;
    height: 57px;
    border-radius: 50%;
    background: #21c063;
    color: #0b141a;
    font-size: 26px;
    font-weight: 700;
    display: flex;
    align-items: center;
    justify-content: center;
`

const NavBar = styled.nav`
    height: 130px;
    flex: none;
    background: #000;
    display: flex;
    align-items: center;
    padding-left: 287px;
`

const NavSquare = styled.div`
    width: 39px;
    height: 40px;
    border-radius: 6px;
    background: #999;
    margin-right: 187px;
`

const NavCircle = styled.div`
    width: 54px;
    height: 54px;
    border-radius: 50%;
    border: 4px solid #999;
    margin-right: 187px;
    display: flex;
    align-items: center;
    justify-content: center;
    &::after {
        content: '';
        width: 30px;
        height: 30px;
        border-radius: 50%;
        background: #999;
    }
`

const NavTriangle = styled.div`
    width: 37px;
    height: 45px;
    background: #999;
    clip-path: polygon(100% 0, 100% 100%, 0 50%);
`

export default App
